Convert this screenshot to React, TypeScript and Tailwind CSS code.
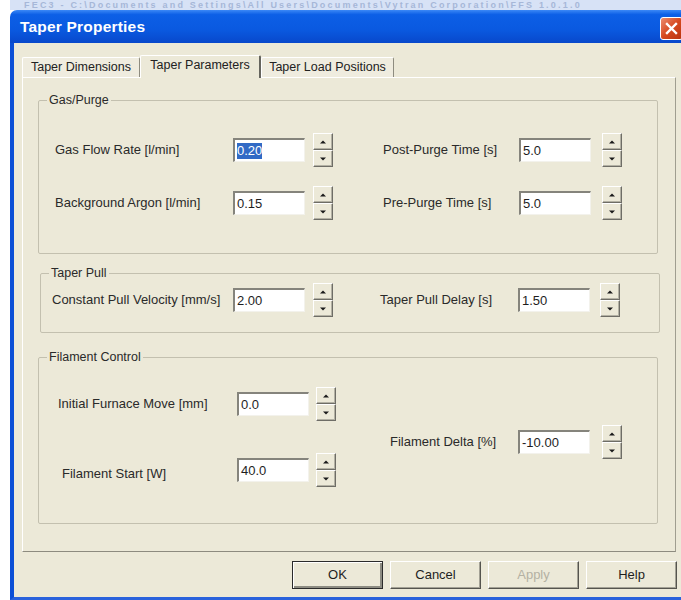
import React from "react";

const FONT = "font-['Liberation_Sans',Arial,sans-serif]";

function Arrow({ up }: { up?: boolean }) {
  return (
    <svg width="6" height="4" viewBox="0 0 6 4" aria-hidden="true">
      <path d={up ? "M0 3.5 L3 0.5 L6 3.5 Z" : "M0 0.5 L6 0.5 L3 3.5 Z"} fill="#1a1a1a" />
    </svg>
  );
}

function SpinButton({ up }: { up?: boolean }) {
  return (
    <div className="h-[17px] w-[20px] flex items-center justify-center bg-[#ece9d8] border border-t-white border-l-white border-r-[#6e6d66] border-b-[#6e6d66] shadow-[inset_-1px_-1px_0_#b3b1a4]">
      <Arrow up={up} />
    </div>
  );
}

function Spinner() {
  return (
    <div className="flex flex-col">
      <SpinButton up />
      <SpinButton />
    </div>
  );
}

function NumBox({ value, selected }: { value: string; selected?: boolean }) {
  return (
    <div className="w-[72px] h-[24px] bg-white border-t-2 border-l-2 border-r border-b border-t-[#85847c] border-l-[#85847c] border-r-[#f3f2ec] border-b-[#f3f2ec] flex items-center pl-[2px] text-[13px] text-[#1e1e1e]">
      {selected ? <span className="bg-[#316ac5] text-white leading-[16px]">{value}</span> : value}
    </div>
  );
}

type FieldProps = {
  label: string;
  value: string;
  labelW: string;
  gap: string;
  selected?: boolean;
  labelClass?: string;
};

function Field({ label, value, labelW, gap, selected, labelClass = "" }: FieldProps) {
  return (
    <div className="flex items-center h-[34px]">
      <span className={`${labelW} ${labelClass} text-[13px] whitespace-nowrap text-[#2a2a2a]`}>{label}</span>
      <NumBox value={value} selected={selected} />
      <div className={gap}>
        <Spinner />
      </div>
    </div>
  );
}

function Group({ title, className = "", children }: { title: string; className?: string; children: React.ReactNode }) {
  return (
    <fieldset className={`border border-[#c3c0af] rounded-[2px] px-[8px] ${className}`}>
      <legend className="px-[2px] text-[12.5px] leading-[15px] text-[#2a2a2a]">{title}</legend>
      {children}
    </fieldset>
  );
}

function Tab({ label, active, w }: { label: string; active?: boolean; w: string }) {
  if (active) {
    return (
      <div
        className={`${w} h-[23px] -mb-[1px] bg-[#ece9d8] border-t border-l border-white border-r-2 border-r-[#66655e] rounded-t-[2px] flex items-center justify-center pb-[3px] text-[12.5px] text-[#222]`}
      >
        {label}
      </div>
    );
  }
  return (
    <div
      className={`${w} h-[20px] bg-[#efecdf] border-t border-l border-white border-r border-r-[#8e8c80] rounded-t-[2px] flex items-center justify-center text-[12.5px] text-[#222]`}
    >
      {label}
    </div>
  );
}

function DialogButton({ label, isDefault, disabled }: { label: string; isDefault?: boolean; disabled?: boolean }) {
  const frame = isDefault
    ? "border border-[#2b2b2b] shadow-[inset_1px_1px_0_#fff,inset_-2px_-2px_0_#8d8c82]"
    : "border border-t-white border-l-white border-r-[#55544e] border-b-[#55544e] shadow-[inset_-1px_-1px_0_#a3a195]";
  return (
    <div
      className={`w-[91px] h-[28px] bg-[#ece9d8] flex items-center justify-center text-[13px] ${frame} ${
        disabled ? "text-[#b4b1a3]" : "text-[#1e1e1e]"
      }`}
    >
      {label}
    </div>
  );
}

export default function App() {
  return (
    <div className={`w-[681px] h-[600px] overflow-hidden bg-white ${FONT}`}>
      {/* edge of the main window's caption above the dialog */}
      <div className="ml-[10px] h-[10px] overflow-hidden bg-[#d7e2f6]">
        <div className="pl-[14px] text-[9px] leading-[10px] font-bold text-[#a6b7d8] whitespace-nowrap tracking-[2.2px]">
          FEC3 - C:\Documents and Settings\All Users\Documents\Vytran Corporation\FFS 1.0.1.0
        </div>
      </div>

      <div className="ml-[10px] w-[679px]">
        {/* caption bar */}
        <div className="h-[33px] rounded-t-[7px] bg-[linear-gradient(180deg,#3b88f6_0%,#0c5fe6_14%,#0a59e0_60%,#0848cb_100%)] flex items-center justify-between pl-[10px] pr-[6px]">
          <span className="text-white font-bold text-[15.5px] tracking-[0.2px] pt-[1px]">Taper Properties</span>
          <div className="w-[23px] h-[23px] mt-[4px] rounded-[3px] border border-white bg-[linear-gradient(135deg,#ec8d70_0%,#d6491f_50%,#b9330f_100%)] flex items-center justify-center">
            <svg width="13" height="13" viewBox="0 0 13 13" aria-hidden="true">
              <path d="M2 2 L11 11 M11 2 L2 11" stroke="#fff" strokeWidth="2.4" strokeLinecap="square" />
            </svg>
          </div>
        </div>

        {/* dialog body */}
        <div className="h-[557px] bg-[#ece9d8] border-l-4 border-r-4 border-b-[3px] border-l-[#0c4fd6] border-r-[#0c4fd6] border-b-[#2a62dc] pt-[12px] pl-[8px]">
          <div className="flex items-end h-[22px] relative z-10">
            <Tab label="Taper Dimensions" w="w-[118px]" />
            <Tab label="Taper Parameters" w="w-[121px]" active />
            <Tab label="Taper Load Positions" w="w-[133px]" />
          </div>

          <div className="w-[654px] border border-t-white border-l-white border-r-[#a09e90] border-b-[#8d8b7f] pt-[15px] pl-[15px] pr-[17px] pb-[27px]">
            <Group title="Gas/Purge" className="pt-[25px] pb-[33px]">
              <div className="flex">
                <div className="flex flex-col gap-[19px] ml-[8px]">
                  <Field label="Gas Flow Rate [l/min]" value="0.20" selected labelW="w-[178px]" gap="ml-[8px]" />
                  <Field label="Background Argon [l/min]" value="0.15" labelW="w-[178px]" gap="ml-[8px]" />
                </div>
                <div className="flex flex-col gap-[19px] ml-[50px]">
                  <Field label="Post-Purge Time [s]" value="5.0" labelW="w-[136px]" gap="ml-[11px]" />
                  <Field label="Pre-Purge Time [s]" value="5.0" labelW="w-[136px]" gap="ml-[11px]" />
                </div>
              </div>
            </Group>

            <Group title="Taper Pull" className="mt-[12px] ml-[2px] -mr-[2px] pt-[2px] pb-[15px]">
              <div className="flex">
                <div className="ml-[3px]">
                  <Field label="Constant Pull Velocity [mm/s]" value="2.00" labelW="w-[181px]" gap="ml-[8px]" />
                </div>
                <div className="ml-[47px]">
                  <Field label="Taper Pull Delay [s]" value="1.50" labelW="w-[138px]" gap="ml-[10px]" />
                </div>
              </div>
            </Group>

            <Group title="Filament Control" className="mt-[17px] pt-[22px] pb-[36px]">
              <div className="flex">
                <div className="flex flex-col gap-[32px] ml-[11px]">
                  <Field label="Initial Furnace Move [mm]" value="0.0" labelW="w-[179px]" gap="ml-[7px]" />
                  <Field
                    label="Filament Start [W]"
                    value="40.0"
                    labelW="w-[179px]"
                    labelClass="pl-[4px] mt-[8px]"
                    gap="ml-[7px]"
                  />
                </div>
                <div className="ml-[54px] pt-[38px]">
                  <Field label="Filament Delta [%]" value="-10.00" labelW="w-[128px]" gap="ml-[12px]" />
                </div>
              </div>
            </Group>
          </div>

          <div className="w-[655px] flex justify-end gap-[7px] mt-[9px]">
            <DialogButton label="OK" isDefault />
            <DialogButton label="Cancel" />
            <DialogButton label="Apply" disabled />
            <DialogButton label="Help" />
          </div>
        </div>
      </div>
    </div>
  );
}
